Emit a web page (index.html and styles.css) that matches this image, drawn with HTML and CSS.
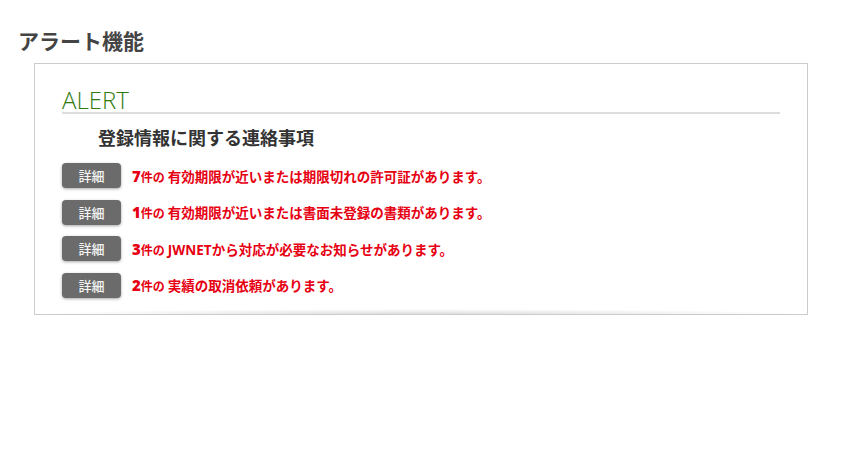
FILE: index.html
```html
<!DOCTYPE html>
<html>
  <head>
    <meta charset="UTF-8">
    <title>アラート機能</title>
    <link rel="stylesheet" href="styles.css">
  </head>
  <body>
    <h1 class="page-title">アラート機能</h1>
    <div class="alert-box">
      <h2 class="alert-head">ALERT</h2>
      <h3 class="alert-sub">登録情報に関する連絡事項</h3>
      <ul class="alert-list">
        <li>
          <button class="detail-btn">詳細</button>
          <span class="alert-msg"><b class="num">7</b><span class="unit">件の</span>有効期限が近いまたは期限切れの許可証があります。</span>
        </li>
        <li>
          <button class="detail-btn">詳細</button>
          <span class="alert-msg"><b class="num">1</b><span class="unit">件の</span>有効期限が近いまたは書面未登録の書類があります。</span>
        </li>
        <li>
          <button class="detail-btn">詳細</button>
          <span class="alert-msg"><b class="num">3</b><span class="unit">件の</span>JWNETから対応が必要なお知らせがあります。</span>
        </li>
        <li>
          <button class="detail-btn">詳細</button>
          <span class="alert-msg"><b class="num">2</b><span class="unit">件の</span>実績の取消依頼があります。</span>
        </li>
      </ul>
    </div>
  </body>
</html>
```

FILE: styles.css
```css
body {
  margin: 0;
  font-family: "Open Sans", "Noto Sans CJK JP", sans-serif;
  background: #fff;
}
.page-title {
  margin: 26px 0 0 18px;
  font-size: 21px;
  line-height: 30px;
  font-weight: bold;
  color: #444;
}
.alert-box {
  width: 718px;
  margin: 7px 0 0 34px;
  padding: 24px 27px 16px 27px;
  border: 1px solid #ccc;
  background: radial-gradient(ellipse at 50% 100%, #dcdcdc 0%, rgba(255,255,255,0) 70%) no-repeat left bottom / 100% 5px, #fff;
}
.alert-head {
  margin: 0;
  font-size: 24px;
  line-height: 24px;
  font-weight: 300;
  color: #2f7a0c;
  border-bottom: 2px solid #ddd;
}
.alert-sub {
  margin: 12px 0 0 36px;
  font-size: 18px;
  line-height: 24px;
  font-weight: bold;
  color: #333;
}
.alert-list {
  list-style: none;
  margin: 13px 0 0 0;
  padding: 0;
  display: flex;
  flex-direction: column;
  gap: 11.5px;
}
.alert-list li {
  display: flex;
  align-items: center;
}
.detail-btn {
  width: 59px;
  height: 25px;
  border: none;
  border-radius: 4px;
  background: #6b6b6b;
  color: #f4f4f4;
  font-family: "Noto Sans CJK JP", sans-serif;
  font-size: 13px;
  font-weight: 500;
  box-shadow: 0 1px 3px rgba(0,0,0,0.35);
  cursor: pointer;
}
.alert-msg {
  margin-left: 11px;
  color: #e60012;
  font-size: 13.5px;
  font-weight: bold;
}
.alert-msg .num {
  font-size: 15px;
}
.alert-msg .unit {
  font-size: 12px;
  margin-right: 3px;
}
```
